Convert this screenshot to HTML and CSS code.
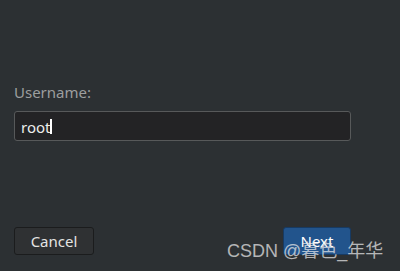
FILE: index.html
```html
<!DOCTYPE html>
<html>
<head>
<meta charset="utf-8">
<link rel="stylesheet" href="styles.css">
</head>
<body>
<div class="page">
  <div class="form">
    <label class="label">Username:</label>
    <div class="field"><span class="value">root</span><span class="caret"></span></div>
  </div>
  <div class="actions">
    <button class="btn cancel">Cancel</button>
    <button class="btn next">Next</button>
  </div>
  <div class="watermark">CSDN @暮色_年华</div>
</div>
</body>
</html>
```
FILE: styles.css
```css
html, body {
  margin: 0;
  padding: 0;
  background: #2c3033;
}
.page {
  position: relative;
  width: 400px;
  height: 271px;
  display: flex;
  flex-direction: column;
  padding: 82px 49px 16px 14px;
  box-sizing: border-box;
  font-family: "Noto Sans", "Open Sans", sans-serif;
}
.form {
  display: flex;
  flex-direction: column;
  gap: 9px;
}
.label {
  font-size: 15px;
  line-height: 20px;
  color: #9c9e9f;
}
.field {
  height: 30px;
  box-sizing: border-box;
  border: 1px solid #57595a;
  border-radius: 3px;
  background: #232325;
  display: flex;
  align-items: center;
  padding-left: 6px;
}
.value {
  font-size: 15px;
  line-height: 20px;
  color: #eeeeec;
  padding-top: 1px;
}
.caret {
  width: 2px;
  height: 15px;
  background: #ffffff;
  margin-left: 0px;
  margin-top: 1px;
}
.actions {
  margin-top: auto;
  display: flex;
  justify-content: space-between;
}
.btn {
  height: 28px;
  box-sizing: border-box;
  border-radius: 3px;
  font-family: "Noto Sans", "Open Sans", sans-serif;
  font-size: 15px;
  line-height: 20px;
  padding: 0;
  color: #e4e4e2;
}
.cancel {
  width: 80px;
  background: #2f3133;
  border: 1px solid #1b1c1d;
}
.next {
  width: 68px;
  background: #22548c;
  border: 1px solid #173a62;
  color: #ffffff;
}
.watermark {
  position: absolute;
  left: 227px;
  top: 241px;
  font-family: "Liberation Sans", "Noto Sans CJK SC", sans-serif;
  font-size: 18px;
  line-height: 20px;
  color: rgba(235, 235, 235, 0.72);
  white-space: nowrap;
}
```
